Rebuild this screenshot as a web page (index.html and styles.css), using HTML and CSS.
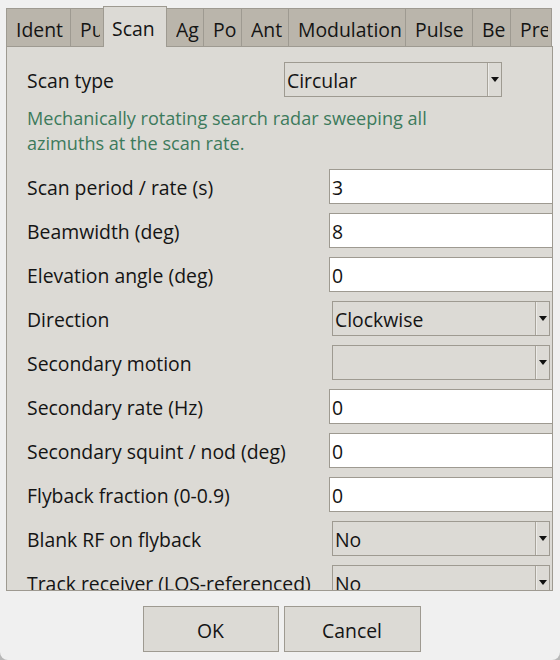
FILE: index.html
```html
<!DOCTYPE html>
<html>
<head>
<meta charset="utf-8">
<link rel="stylesheet" href="styles.css">
</head>
<body>
<div class="window">
  <div class="notebook">
    <div class="tabs">
      <div class="tab t-ident"><span class="tab-text">Ident</span></div>
      <div class="tab t-pu"><span class="tab-text">Pu</span></div>
      <div class="tab t-scan active"><span class="tab-text">Scan</span></div>
      <div class="tab t-ag"><span class="tab-text">Ag</span></div>
      <div class="tab t-pc"><span class="tab-text">Po</span></div>
      <div class="tab t-ant"><span class="tab-text">Ant</span></div>
      <div class="tab t-mod"><span class="tab-text">Modulation</span></div>
      <div class="tab t-pulse"><span class="tab-text">Pulse</span></div>
      <div class="tab t-be"><span class="tab-text">Be</span></div>
      <div class="tab t-pre"><span class="tab-text">Pre</span></div>
    </div>
    <div class="panel">
      <div class="top-row">
        <span class="label">Scan type</span>
        <div class="combo combo-scan"><span class="combo-text">Circular</span><span class="arrow"></span></div>
      </div>
      <p class="desc">Mechanically rotating search radar sweeping all<br>azimuths at the scan rate.</p>
      <div class="form">
        <span class="label">Scan period / rate (s)</span><div class="entry">3</div>
        <span class="label">Beamwidth (deg)</span><div class="entry">8</div>
        <span class="label">Elevation angle (deg)</span><div class="entry">0</div>
        <span class="label">Direction</span><div class="combo"><span class="combo-text">Clockwise</span><span class="arrow"></span></div>
        <span class="label">Secondary motion</span><div class="combo"><span class="combo-text"></span><span class="arrow"></span></div>
        <span class="label">Secondary rate (Hz)</span><div class="entry">0</div>
        <span class="label">Secondary squint / nod (deg)</span><div class="entry">0</div>
        <span class="label">Flyback fraction (0-0.9)</span><div class="entry">0</div>
        <span class="label">Blank RF on flyback</span><div class="combo"><span class="combo-text">No</span><span class="arrow"></span></div>
        <span class="label">Track receiver (LOS-referenced)</span><div class="combo"><span class="combo-text">No</span><span class="arrow"></span></div>
      </div>
    </div>
  </div>
  <div class="buttons">
    <div class="btn btn-ok">OK</div>
    <div class="btn btn-cancel">Cancel</div>
  </div>
</div>
</body>
</html>
```
FILE: styles.css
```css
html {
  background: #b8b8b8;
}
body {
  margin: 0;
  width: 560px;
  height: 660px;
  overflow: hidden;
  background: #f0f0f0;
  border-radius: 0 0 8px 8px;
  font-family: "Open Sans", "Noto Sans", sans-serif;
  font-size: 19.4px;
  color: #141414;
}
.window {
  padding: 6px 7px 0 6px;
}
.notebook {
  width: 547px;
}
.tabs {
  display: flex;
  align-items: flex-end;
  height: 40px;
}
.tab {
  box-sizing: border-box;
  height: 38px;
  background: #bab5ab;
  border: 1px solid #9e9a91;
  border-bottom: none;
  border-left: none;
  padding: 2px 3px 0 9px;
  line-height: 38px;
  white-space: nowrap;
  position: relative;
}
.tab-text {
  display: block;
  overflow: hidden;
  white-space: nowrap;
}
.tab:first-child {
  border-left: 1px solid #9e9a91;
}
.tab.active {
  line-height: 41px;
  background: #dcdad5;
  border-left: 1px solid #9e9a91;
  margin-bottom: -1px;
  height: 41px;
  padding-left: 8px;
  padding-top: 1px;
  z-index: 1;
}
.t-ident { width: 65px; }
.t-pu { width: 33px; }
.t-scan { width: 64px; margin-left: -1px; }
.t-ag { width: 37px; }
.t-pc { width: 38px; }
.t-ant { width: 47px; }
.t-mod { width: 117px; }
.t-pulse { width: 67px; }
.t-be { width: 38px; }
.t-pre { width: 41px; }

.panel {
  box-sizing: border-box;
  height: 545px;
  background: #dcdad5;
  border: 1px solid #9e9a91;
  overflow: hidden;
  padding: 15px 0 0 20px;
}
.top-row {
  display: flex;
  align-items: center;
  height: 35px;
}
.top-row .label {
  width: 257px;
}
.label {
  white-space: nowrap;
  padding-top: 2px;
}
.combo {
  box-sizing: border-box;
  height: 35px;
  width: 218px;
  border: 1px solid #9e9a91;
  background: #dcdad5;
  display: flex;
  align-items: center;
}
.combo-text {
  flex: 1;
  padding: 2px 0 0 2px;
  white-space: nowrap;
}
.arrow {
  width: 13px;
  height: 100%;
  border-left: 1px solid #a8a49b;
  box-shadow: inset 1px 0 0 #ecebe8;
  display: flex;
  align-items: center;
  justify-content: center;
}
.arrow::after {
  content: "";
  width: 0;
  height: 0;
  margin-left: 1px;
  border-left: 4px solid transparent;
  border-right: 4px solid transparent;
  border-top: 5px solid #111;
}
.desc {
  margin: 9px 0 0 0;
  font-size: 18.1px;
  line-height: 25px;
  color: #3d7a5c;
}
.form {
  margin-top: 13px;
  display: grid;
  grid-template-columns: 302px 1fr;
  grid-auto-rows: 35px;
  row-gap: 9px;
  align-items: center;
}
.entry {
  box-sizing: border-box;
  height: 35px;
  width: 240px;
  background: #fff;
  border: 1px solid #9e9a91;
  padding: 1px 0 0 2px;
  line-height: 33px;
}
.form .combo {
  margin-left: 3px;
}
.buttons {
  display: flex;
  justify-content: center;
  gap: 5px;
  padding: 15px 0 0 4px;
}
.btn {
  box-sizing: border-box;
  height: 46px;
  background: #dcdad5;
  border: 1px solid #9e9a91;
  display: flex;
  align-items: center;
  justify-content: center;
  padding-top: 2px;
}
.btn-ok { width: 136px; }
.btn-cancel { width: 137px; }
```
